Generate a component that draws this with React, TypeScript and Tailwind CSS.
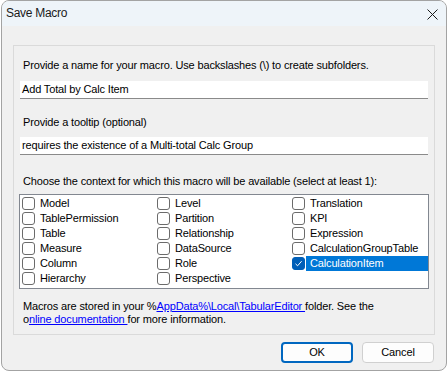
import React from 'react';

const col1 = ['Model', 'TablePermission', 'Table', 'Measure', 'Column', 'Hierarchy'];
const col2 = ['Level', 'Partition', 'Relationship', 'DataSource', 'Role', 'Perspective'];
const col3 = ['Translation', 'KPI', 'Expression', 'CalculationGroupTable', 'CalculationItem'];

function CheckItem({ label, checked = false, wide = false }: { label: string; checked?: boolean; wide?: boolean }) {
  return (
    <div className={`flex h-[15px] items-center ${wide ? 'w-full' : 'w-[135px]'}`}>
      <div
        className={`ml-[1px] flex h-[13px] w-[13px] shrink-0 items-center justify-center rounded-[3px] border ${
          checked ? 'border-[#005fb8] bg-[#005fb8]' : 'border-[#6b6b6b] bg-white'
        }`}
      >
        {checked && (
          <svg width="9" height="9" viewBox="0 0 9 9">
            <path d="M1.5 4.8 L3.6 6.8 L7.6 2.2" fill="none" stroke="#ffffff" strokeWidth="1" />
          </svg>
        )}
      </div>
      <div
        className={`ml-[1px] flex h-[15px] items-center whitespace-nowrap pl-[4px] ${
          checked ? 'flex-1 bg-[#0078d7] text-white' : 'text-black'
        }`}
      >
        {label}
      </div>
    </div>
  );
}

export default function App() {
  return (
    <div className="h-[373px] w-[448px] bg-white font-['Liberation_Sans',Arial,sans-serif]">
      <div className="ml-[1px] flex h-[371px] w-[446px] flex-col overflow-hidden rounded-lg border border-[#a3a3a3] bg-[#f0f0f0] text-[11px] leading-[15px] tracking-[-0.15px] text-black">
        {/* Title bar */}
        <div className="flex h-[25px] shrink-0 items-center justify-between bg-[#eef4f9] pl-[4px] pr-[8px]">
          <span className="text-[12px] tracking-[-0.3px] text-[#1a1a1a]">Save Macro</span>
          <svg width="11" height="11" viewBox="0 0 11 11" className="mt-[1px]">
            <path d="M0.5 0.5 L10.5 10.5 M10.5 0.5 L0.5 10.5" stroke="#1a1a1a" strokeWidth="1" />
          </svg>
        </div>

        {/* Panel */}
        <div className="mx-[11px] mt-[19px] flex h-[290px] flex-col border border-[#dadada] px-[6px]">
          <div className="mt-[12px] pl-[3px]">Provide a name for your macro. Use backslashes (\) to create subfolders.</div>
          <div className="mt-[8px] flex h-[18px] items-center border-b border-[#8a8a8a] bg-white pl-[2px]">
            Add Total by Calc Item
          </div>

          <div className="mt-[16px] pl-[3px]">Provide a tooltip (optional)</div>
          <div className="mt-[7px] flex h-[18px] items-center border-b border-[#8a8a8a] bg-white pl-[2px]">
            requires the existence of a Multi-total Calc Group
          </div>

          <div className="mt-[19px] pl-[3px]">Choose the context for which this macro will be available (select at least 1):</div>

          <div className="mx-[-1px] mt-[5px] flex h-[95px] border border-[#828790] bg-white pl-[1px] pt-[1px]">
            <div className="flex flex-col">
              {col1.map((l) => (
                <CheckItem key={l} label={l} />
              ))}
            </div>
            <div className="flex flex-col">
              {col2.map((l) => (
                <CheckItem key={l} label={l} />
              ))}
            </div>
            <div className="flex flex-1 flex-col">
              {col3.map((l) => (
                <CheckItem key={l} label={l} wide checked={l === 'CalculationItem'} />
              ))}
            </div>
          </div>

          <div className="mt-[11px] pl-[3px] leading-[13px]">
            <div>
              Macros are stored in your %<span className="text-[#0000ff] underline">AppData%\Local\TabularEditor </span>
              folder. See the
            </div>
            <div>
              o<span className="text-[#0000ff] underline">nline documentation </span>for more information.
            </div>
          </div>
        </div>

        {/* Buttons */}
        <div className="mr-[12px] mt-[7px] flex justify-end gap-[9px]">
          <button className="flex h-[21px] w-[72px] items-center justify-center rounded-[4px] border-2 border-[#0067c0] bg-[#fdfdfd] text-black">
            OK
          </button>
          <button className="flex h-[21px] w-[72px] items-center justify-center rounded-[4px] border border-[#d0d0d0] bg-[#fdfdfd] text-black">
            Cancel
          </button>
        </div>
      </div>
    </div>
  );
}
